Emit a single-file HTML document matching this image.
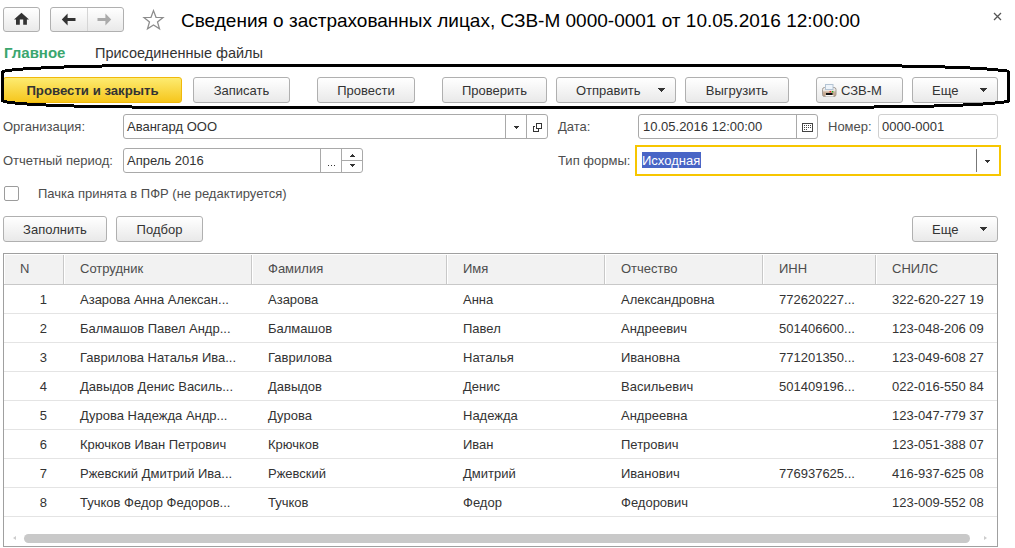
<!DOCTYPE html>
<html><head><meta charset="utf-8">
<style>
*{box-sizing:border-box;margin:0;padding:0}
html,body{width:1015px;height:548px;overflow:hidden;background:#fff}
body{position:relative;font-family:"Liberation Sans",sans-serif;font-size:13px;color:#333}
.a{position:absolute;white-space:nowrap}
.btn{position:absolute;height:26px;border:1px solid #b0b0b0;border-radius:3px;background:linear-gradient(#ffffff,#e9e9e9);color:#333;text-align:center;line-height:25px;font-size:13px}
.ybtn{border-color:#f0b90c;background:linear-gradient(#fdeb70,#f6c61c);font-weight:bold}
.arr{position:absolute;width:0;height:0;border-left:3.5px solid transparent;border-right:3.5px solid transparent;border-top:4px solid #333}
.inp{position:absolute;border:1px solid #a9a9a9;border-radius:3px;background:#fff;height:24px}
.lbl{position:absolute;color:#4d4d4d;white-space:nowrap}
.bk{position:absolute;background:#000}
.th{position:absolute;top:255px;height:29px;background:#f2f2f2;color:#4d4d4d;line-height:29px}
.sep{position:absolute;top:255px;height:29px;width:1px;background:#c8c8c8}
.sepw{position:absolute;top:255px;height:29px;width:1px;background:#fff}
.rl{position:absolute;left:4px;width:993px;height:1px;background:#e4e4e4}
.c{position:absolute;white-space:nowrap;color:#333}
</style></head><body>

<!-- top nav -->
<div class="btn" style="left:3px;top:7px;width:37px;height:25px"></div>
<svg class="a" style="left:13px;top:12px" width="17" height="14" viewBox="0 0 17 14"><path d="M8.5 0.8 L1 7.6 H3 V12.7 H6.8 V7.6 H10.2 V12.7 H13.9 V7.6 H16 Z" fill="#333"/></svg>
<div class="btn" style="left:50px;top:7px;width:74px;height:25px"></div>
<div class="a" style="left:87px;top:8px;width:1px;height:23px;background:#d5d5d5"></div>
<svg class="a" style="left:61px;top:13px" width="16" height="13" viewBox="0 0 16 13"><path d="M0.8 6.5 L6.6 0.6 V5 H14.5 V8 H6.6 V12.4 Z" fill="#333"/></svg>
<svg class="a" style="left:96px;top:13px" width="16" height="13" viewBox="0 0 16 13"><path d="M15.2 6.5 L9.4 0.6 V5 H1.5 V8 H9.4 V12.4 Z" fill="#aaa"/></svg>
<svg class="a" style="left:142px;top:9px" width="23" height="22" viewBox="0 0 23 22"><path d="M11.5 1.6 L14.0 8.3 L21.0 8.5 L15.5 12.9 L17.5 19.8 L11.5 15.9 L5.5 19.8 L7.5 12.9 L2.0 8.5 L9.0 8.3 Z" fill="none" stroke="#8c8c8c" stroke-width="1.25"/></svg>
<div class="a" style="left:181px;top:9px;font-size:19px;color:#000;line-height:24px">Сведения о застрахованных лицах, СЗВ-М 0000-0001 от 10.05.2016 12:00:00</div>
<svg class="a" style="left:993px;top:12px" width="9" height="9" viewBox="0 0 9 9"><path d="M1 1 L8 8 M8 1 L1 8" stroke="#555" stroke-width="1.3"/></svg>

<!-- tabs -->
<div class="a" style="left:4px;top:44px;font-size:15px;font-weight:bold;color:#3aa66e;line-height:18px">Главное</div>
<div class="a" style="left:95px;top:44px;font-size:14.5px;color:#333;line-height:18px">Присоединенные файлы</div>

<!-- toolbar -->
<div class="btn ybtn" style="left:3px;top:77px;width:179px;font-size:13.2px">Провести и закрыть</div>
<div class="btn" style="left:193px;top:77px;width:97px">Записать</div>
<div class="btn" style="left:317px;top:77px;width:98px">Провести</div>
<div class="btn" style="left:442px;top:77px;width:105px">Проверить</div>
<div class="btn" style="left:556px;top:77px;width:120px;text-align:left;padding-left:19px">Отправить</div>
<svg class="a" style="left:658px;top:88px" width="7" height="4" shape-rendering="crispEdges" fill="#333"><rect x="0" y="0" width="7" height="1"/><rect x="1" y="1" width="5" height="1"/><rect x="2" y="2" width="3" height="1"/><rect x="3" y="3" width="1" height="1"/></svg>
<div class="btn" style="left:685px;top:77px;width:104px">Выгрузить</div>
<div class="btn" style="left:816px;top:77px;width:87px;text-align:left;padding-left:24px">СЗВ-М</div>
<svg class="a" style="left:822px;top:83px" width="15" height="14" viewBox="0 0 15 14">
<defs><linearGradient id="pb" x1="0" y1="0" x2="0" y2="1"><stop offset="0" stop-color="#f6f6f6"/><stop offset="0.35" stop-color="#e8e2dc"/><stop offset="0.5" stop-color="#cdb39d"/><stop offset="1" stop-color="#b89a80"/></linearGradient></defs>
<rect x="0.5" y="4.5" width="13.5" height="9" rx="2" fill="url(#pb)" stroke="#a09a94"/>
<rect x="3.5" y="1.5" width="7.5" height="5" fill="#eef4fa" stroke="#b4c4d4"/>
<rect x="7.6" y="8" width="1.5" height="1.4" fill="#e22"/><rect x="9.8" y="8" width="1.5" height="1.4" fill="#2a2"/>
<rect x="4" y="10" width="6.5" height="2" fill="#111"/>
<rect x="3.5" y="12" width="8" height="1.5" fill="#fafafa"/>
</svg>
<div class="btn" style="left:912px;top:77px;width:86px;text-align:left;padding-left:19px">Еще</div>
<svg class="a" style="left:980px;top:88px" width="7" height="4" shape-rendering="crispEdges" fill="#333"><rect x="0" y="0" width="7" height="1"/><rect x="1" y="1" width="5" height="1"/><rect x="2" y="2" width="3" height="1"/><rect x="3" y="3" width="1" height="1"/></svg>

<!-- hand-drawn outline -->
<div class="bk" style="left:1px;top:71px;width:3px;height:31px"></div>
<div class="bk" style="left:2px;top:70px;width:3px;height:3px"></div>
<div class="bk" style="left:5px;top:69px;width:7px;height:3px"></div>
<div class="bk" style="left:12px;top:68px;width:11px;height:3px"></div>
<div class="bk" style="left:23px;top:67px;width:18px;height:3px"></div>
<div class="bk" style="left:41px;top:66px;width:23px;height:3px"></div>
<div class="bk" style="left:64px;top:65px;width:38px;height:3px"></div>
<div class="bk" style="left:102px;top:64px;width:800px;height:3px"></div>
<div class="bk" style="left:902px;top:65px;width:43px;height:3px"></div>
<div class="bk" style="left:945px;top:66px;width:25px;height:3px"></div>
<div class="bk" style="left:970px;top:67px;width:17px;height:3px"></div>
<div class="bk" style="left:987px;top:68px;width:11px;height:3px"></div>
<div class="bk" style="left:998px;top:69px;width:9px;height:3px"></div>
<div class="bk" style="left:1006px;top:70px;width:3px;height:2px"></div>
<div class="bk" style="left:1007px;top:71px;width:3px;height:31px"></div>
<div class="bk" style="left:1004px;top:100px;width:5px;height:3px"></div>
<div class="bk" style="left:995px;top:101px;width:9px;height:3px"></div>
<div class="bk" style="left:983px;top:102px;width:12px;height:3px"></div>
<div class="bk" style="left:963px;top:103px;width:20px;height:3px"></div>
<div class="bk" style="left:934px;top:104px;width:29px;height:3px"></div>
<div class="bk" style="left:874px;top:105px;width:60px;height:3px"></div>
<div class="bk" style="left:132px;top:106px;width:742px;height:3px"></div>
<div class="bk" style="left:74px;top:105px;width:58px;height:3px"></div>
<div class="bk" style="left:46px;top:104px;width:28px;height:3px"></div>
<div class="bk" style="left:27px;top:103px;width:19px;height:3px"></div>
<div class="bk" style="left:15px;top:102px;width:12px;height:3px"></div>
<div class="bk" style="left:7px;top:101px;width:8px;height:3px"></div>
<div class="bk" style="left:3px;top:100px;width:4px;height:3px"></div>

<!-- form row 1 -->
<div class="lbl" style="left:3px;top:119px">Организация:</div>
<div class="inp" style="left:123px;top:114px;width:425px;height:25px"></div>
<div class="a" style="left:505px;top:115px;width:1px;height:23px;background:#a9a9a9"></div>
<div class="a" style="left:526px;top:115px;width:1px;height:23px;background:#a9a9a9"></div>
<div class="c" style="left:127px;top:119px">Авангард ООО</div>
<svg class="a" style="left:514px;top:126px" width="5" height="3" shape-rendering="crispEdges"><rect x="0" y="0" width="5" height="1" fill="#333"/><rect x="1" y="1" width="3" height="1" fill="#333"/><rect x="2" y="2" width="1" height="1" fill="#333"/></svg>
<svg class="a" style="left:533px;top:123px" width="10" height="10" shape-rendering="crispEdges" fill="#333"><rect x="3" y="0" width="6" height="1"/><rect x="3" y="5" width="6" height="1"/><rect x="3" y="0" width="1" height="6"/><rect x="8" y="0" width="1" height="6"/><rect x="0" y="3" width="2" height="1"/><rect x="0" y="3" width="1" height="6"/><rect x="0" y="8" width="6" height="1"/><rect x="5" y="6" width="1" height="3"/></svg>
<div class="lbl" style="left:558px;top:119px">Дата:</div>
<div class="inp" style="left:638px;top:114px;width:180px;height:25px"></div>
<div class="a" style="left:796px;top:115px;width:1px;height:23px;background:#a9a9a9"></div>
<div class="c" style="left:643px;top:119px">10.05.2016 12:00:00</div>
<svg class="a" style="left:802px;top:123px" width="11" height="9" shape-rendering="crispEdges" fill="#444"><rect x="0" y="0" width="11" height="1"/><rect x="0" y="8" width="11" height="1"/><rect x="0" y="0" width="1" height="9"/><rect x="10" y="0" width="1" height="9"/><rect x="2" y="2" width="1" height="1"/><rect x="4" y="2" width="1" height="1"/><rect x="6" y="2" width="1" height="1"/><rect x="8" y="2" width="1" height="1"/><rect x="2" y="4" width="1" height="1"/><rect x="4" y="4" width="1" height="1"/><rect x="6" y="4" width="1" height="1"/><rect x="8" y="4" width="1" height="1"/><rect x="2" y="6" width="1" height="1"/><rect x="4" y="6" width="1" height="1"/></svg>
<div class="lbl" style="left:828px;top:119px">Номер:</div>
<div class="inp" style="left:878px;top:114px;width:120px;height:25px;border-color:#d0d0d0"></div>
<div class="c" style="left:882px;top:119px">0000-0001</div>

<!-- form row 2 -->
<div class="lbl" style="left:3px;top:153px">Отчетный период:</div>
<div class="inp" style="left:123px;top:148px;width:240px;height:25px"></div>
<div class="a" style="left:320px;top:149px;width:1px;height:23px;background:#a9a9a9"></div>
<div class="a" style="left:341px;top:149px;width:1px;height:23px;background:#a9a9a9"></div>
<div class="a" style="left:341px;top:160px;width:21px;height:1px;background:#a9a9a9"></div>
<div class="c" style="left:127px;top:153px">Апрель 2016</div>
<div class="a" style="left:328px;top:165px;width:1px;height:1px;background:#333"></div>
<div class="a" style="left:331px;top:165px;width:1px;height:1px;background:#333"></div>
<div class="a" style="left:334px;top:165px;width:1px;height:1px;background:#333"></div>
<svg class="a" style="left:350px;top:154px" width="5" height="3" shape-rendering="crispEdges" fill="#333"><rect x="2" y="0" width="1" height="1"/><rect x="1" y="1" width="3" height="1"/><rect x="0" y="2" width="5" height="1"/></svg>
<svg class="a" style="left:350px;top:164px" width="5" height="3" shape-rendering="crispEdges" fill="#333"><rect x="0" y="0" width="5" height="1"/><rect x="1" y="1" width="3" height="1"/><rect x="2" y="2" width="1" height="1"/></svg>
<div class="lbl" style="left:558px;top:153px">Тип формы:</div>
<div class="a" style="left:635px;top:145px;width:366px;height:31px;border:2px solid #f7c600"></div>
<div class="a" style="left:976px;top:149px;width:1px;height:23px;background:#777"></div>
<svg class="a" style="left:985px;top:160px" width="5" height="3" shape-rendering="crispEdges" fill="#333"><rect x="0" y="0" width="5" height="1"/><rect x="1" y="1" width="3" height="1"/><rect x="2" y="2" width="1" height="1"/></svg>
<div class="a" style="left:642px;top:152px;width:59px;height:16px;background:#4865c6"></div>
<div class="a" style="left:642px;top:153px;color:#fff;line-height:15px">Исходная</div>

<!-- checkbox -->
<div class="a" style="left:4px;top:186px;width:15px;height:15px;border:1px solid #9c9c9c;border-radius:2px;background:#fff"></div>
<div class="lbl" style="left:38px;top:186px">Пачка принята в ПФР (не редактируется)</div>

<!-- buttons row -->
<div class="btn" style="left:3px;top:216px;width:104px">Заполнить</div>
<div class="btn" style="left:116px;top:216px;width:87px">Подбор</div>
<div class="btn" style="left:912px;top:216px;width:86px;text-align:left;padding-left:19px">Еще</div>
<svg class="a" style="left:980px;top:227px" width="7" height="4" shape-rendering="crispEdges" fill="#333"><rect x="0" y="0" width="7" height="1"/><rect x="1" y="1" width="5" height="1"/><rect x="2" y="2" width="3" height="1"/><rect x="3" y="3" width="1" height="1"/></svg>

<!-- table -->
<div class="a" style="left:3px;top:253px;width:995px;height:294px;border:1px solid #a0a0a0"></div>
<div class="th" style="left:5px;width:992px"></div>
<div class="a" style="left:4px;top:284px;width:993px;height:1px;background:#c8c8c8"></div>
<div class="sep" style="left:63px"></div><div class="sepw" style="left:64px"></div>
<div class="sep" style="left:251px"></div><div class="sepw" style="left:252px"></div>
<div class="sep" style="left:446px"></div><div class="sepw" style="left:447px"></div>
<div class="sep" style="left:604px"></div><div class="sepw" style="left:605px"></div>
<div class="sep" style="left:762px"></div><div class="sepw" style="left:763px"></div>
<div class="sep" style="left:875px"></div><div class="sepw" style="left:876px"></div>
<div class="c" style="left:20px;top:261px;color:#4d4d4d">N</div>
<div class="c" style="left:80px;top:261px;color:#4d4d4d">Сотрудник</div>
<div class="c" style="left:268px;top:261px;color:#4d4d4d">Фамилия</div>
<div class="c" style="left:463px;top:261px;color:#4d4d4d">Имя</div>
<div class="c" style="left:621px;top:261px;color:#4d4d4d">Отчество</div>
<div class="c" style="left:779px;top:261px;color:#4d4d4d">ИНН</div>
<div class="c" style="left:892px;top:261px;color:#4d4d4d">СНИЛС</div>

<div class="rl" style="top:313px"></div>
<div class="rl" style="top:342px"></div>
<div class="rl" style="top:371px"></div>
<div class="rl" style="top:400px"></div>
<div class="rl" style="top:429px"></div>
<div class="rl" style="top:458px"></div>
<div class="rl" style="top:487px"></div>
<div class="rl" style="top:516px"></div>

<div id="rows">
<div class="c" style="right:968px;top:292px">1</div>
<div class="c" style="left:80px;top:292px">Азарова Анна Алексан...</div>
<div class="c" style="left:268px;top:292px">Азарова</div>
<div class="c" style="left:463px;top:292px">Анна</div>
<div class="c" style="left:621px;top:292px">Александровна</div>
<div class="c" style="left:779px;top:292px">772620227...</div>
<div class="c" style="left:892px;top:292px">322-620-227 19</div>
<div class="c" style="right:968px;top:321px">2</div>
<div class="c" style="left:80px;top:321px">Балмашов Павел Андр...</div>
<div class="c" style="left:268px;top:321px">Балмашов</div>
<div class="c" style="left:463px;top:321px">Павел</div>
<div class="c" style="left:621px;top:321px">Андреевич</div>
<div class="c" style="left:779px;top:321px">501406600...</div>
<div class="c" style="left:892px;top:321px">123-048-206 09</div>
<div class="c" style="right:968px;top:350px">3</div>
<div class="c" style="left:80px;top:350px">Гаврилова Наталья Ива...</div>
<div class="c" style="left:268px;top:350px">Гаврилова</div>
<div class="c" style="left:463px;top:350px">Наталья</div>
<div class="c" style="left:621px;top:350px">Ивановна</div>
<div class="c" style="left:779px;top:350px">771201350...</div>
<div class="c" style="left:892px;top:350px">123-049-608 27</div>
<div class="c" style="right:968px;top:379px">4</div>
<div class="c" style="left:80px;top:379px">Давыдов Денис Василь...</div>
<div class="c" style="left:268px;top:379px">Давыдов</div>
<div class="c" style="left:463px;top:379px">Денис</div>
<div class="c" style="left:621px;top:379px">Васильевич</div>
<div class="c" style="left:779px;top:379px">501409196...</div>
<div class="c" style="left:892px;top:379px">022-016-550 84</div>
<div class="c" style="right:968px;top:408px">5</div>
<div class="c" style="left:80px;top:408px">Дурова Надежда Андр...</div>
<div class="c" style="left:268px;top:408px">Дурова</div>
<div class="c" style="left:463px;top:408px">Надежда</div>
<div class="c" style="left:621px;top:408px">Андреевна</div>
<div class="c" style="left:892px;top:408px">123-047-779 37</div>
<div class="c" style="right:968px;top:437px">6</div>
<div class="c" style="left:80px;top:437px">Крючков Иван Петрович</div>
<div class="c" style="left:268px;top:437px">Крючков</div>
<div class="c" style="left:463px;top:437px">Иван</div>
<div class="c" style="left:621px;top:437px">Петрович</div>
<div class="c" style="left:892px;top:437px">123-051-388 07</div>
<div class="c" style="right:968px;top:466px">7</div>
<div class="c" style="left:80px;top:466px">Ржевский Дмитрий Ива...</div>
<div class="c" style="left:268px;top:466px">Ржевский</div>
<div class="c" style="left:463px;top:466px">Дмитрий</div>
<div class="c" style="left:621px;top:466px">Иванович</div>
<div class="c" style="left:779px;top:466px">776937625...</div>
<div class="c" style="left:892px;top:466px">416-937-625 08</div>
<div class="c" style="right:968px;top:495px">8</div>
<div class="c" style="left:80px;top:495px">Тучков Федор Федоров...</div>
<div class="c" style="left:268px;top:495px">Тучков</div>
<div class="c" style="left:463px;top:495px">Федор</div>
<div class="c" style="left:621px;top:495px">Федорович</div>
<div class="c" style="left:892px;top:495px">123-009-552 08</div>
</div><!--endrows-->

<!-- scrollbar -->
<div class="a" style="left:24px;top:534px;width:946px;height:9px;border-radius:4.5px;background:#c9c9c9"></div>
<div class="a" style="left:13px;top:536px;width:0;height:0;border-top:2.5px solid transparent;border-bottom:2.5px solid transparent;border-right:3px solid #ccc"></div>
<div class="a" style="left:984px;top:536px;width:0;height:0;border-top:2.5px solid transparent;border-bottom:2.5px solid transparent;border-left:3px solid #ccc"></div>
</body></html>
